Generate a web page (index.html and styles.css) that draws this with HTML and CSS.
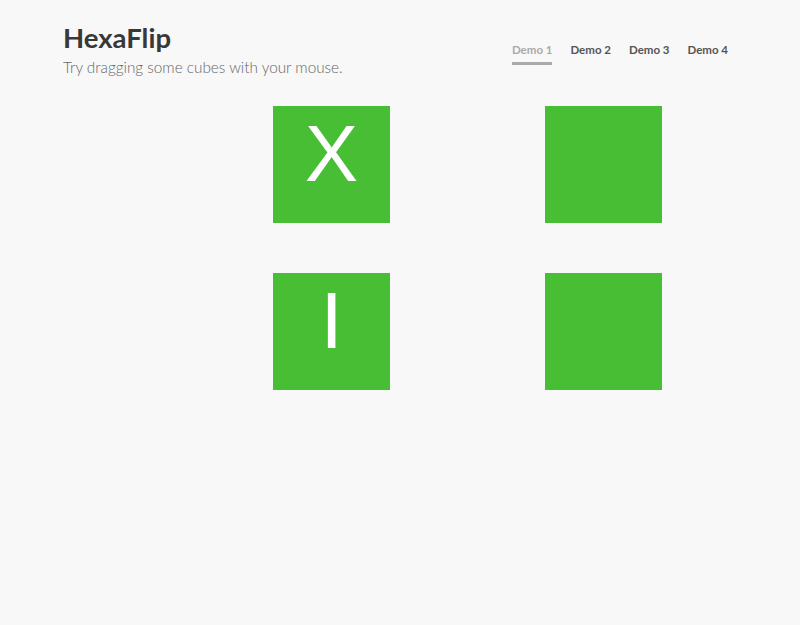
FILE: index.html
```html
<!DOCTYPE html>
<html lang="en">
<head>
    <meta charset="UTF-8">
    <meta name="viewport" content="width=device-width, initial-scale=1.0">
    <title>HexaFlip</title>
    <link rel="stylesheet" href="styles.css">
</head>
<body>
    <header class="header">
        <div class="intro">
            <h1>HexaFlip</h1>
            <p>Try dragging some cubes with your mouse.</p>
        </div>
        <nav class="demos">
            <a href="#" class="current">Demo 1</a>
            <a href="#">Demo 2</a>
            <a href="#">Demo 3</a>
            <a href="#">Demo 4</a>
        </nav>
    </header>

    <!-- CUBES -->
    <div class="cubes">
        <div class="cube">X</div>
        <div class="cube"></div>
        <div class="cube">I</div>
        <div class="cube"></div>
    </div>
</body>
</html>
```

FILE: styles.css
```css
body {
    font-family: Lato, sans-serif;
    background-color: #f8f8f8;
    margin: 0;
    color: #333;
}
.header {
    display: flex;
    justify-content: space-between;
    align-items: flex-start;
    padding: 20px 72px 0 63px;
}
h1 {
    margin: 0;
    font-size: 27.5px;
    font-weight: 700;
    line-height: 36px;
    color: #383838;
}
.intro p {
    margin: 0;
    font-size: 15.3px;
    font-weight: 300;
    color: #666;
    line-height: 22px;
}
.demos {
    display: flex;
    gap: 18px;
    padding-top: 23px;
}
.demos a {
    font-size: 11.5px;
    font-weight: 700;
    color: #555;
    text-decoration: none;
    padding-bottom: 6px;
    border-bottom: 3px solid transparent;
}
.demos a.current {
    color: #aaa;
    border-bottom-color: #aaa;
}
.cubes {
    display: grid;
    grid-template-columns: 117px 117px;
    column-gap: 155px;
    row-gap: 50px;
    padding: 28px 0 0 273px;
}
.cube {
    height: 117px;
    background-color: #47be34;
    color: #fff;
    font-family: "Liberation Sans", Arial, sans-serif;
    font-size: 80px;
    line-height: 80px;
    text-align: center;
    padding-top: 8px;
    box-sizing: border-box;
}
```
